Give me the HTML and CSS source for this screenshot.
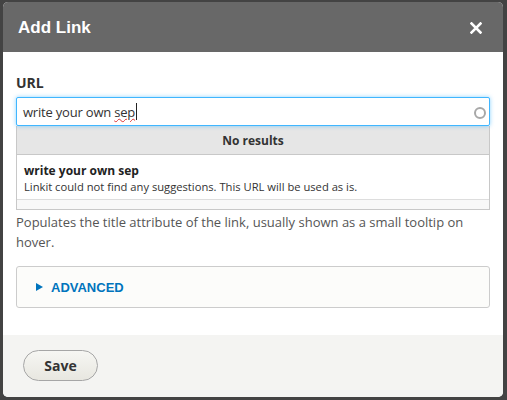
FILE: index.html
```html
<!DOCTYPE html>
<html>
<head>
<meta charset="utf-8">
<link rel="stylesheet" href="styles.css">
</head>
<body>
<div class="backdrop">
  <div class="dialog">
    <div class="titlebar">
      <span class="title">Add Link</span>
      <svg class="close" width="12" height="12" viewBox="0 0 12 12"><path d="M1.5 1.5 L10.5 10.5 M10.5 1.5 L1.5 10.5" stroke="#fff" stroke-width="2.6" stroke-linecap="square"/></svg>
    </div>
    <div class="content">
      <label class="label">URL</label>
      <div class="field">
        <div class="input">
          <span class="value">write your own <span class="spell">sep</span></span><span class="caret"></span>
          <span class="spinner"></span>
        </div>
        <div class="dropdown">
          <div class="noresults">No results</div>
          <div class="item">
            <div class="item-title">write your own sep</div>
            <div class="item-desc">Linkit could not find any suggestions. This URL will be used as is.</div>
          </div>
          <div class="item-foot"></div>
        </div>
      </div>
      <p class="desc">Populates the title attribute of the link, usually shown as a small tooltip on hover.</p>
      <div class="details">
        <span class="arrow"></span><span class="summary">ADVANCED</span>
      </div>
    </div>
    <div class="footer">
      <button class="save">Save</button>
    </div>
  </div>
</div>
</body>
</html>
```
FILE: styles.css
```css
html, body {
  margin: 0;
  padding: 0;
  background: #414141;
}
.backdrop {
  width: 507px;
  height: 400px;
  box-sizing: border-box;
  padding: 2px 4px 3px 3px;
  background: #434343;
}
.dialog {
  width: 500px;
  height: 395px;
  border-radius: 5px;
  overflow: hidden;
  display: flex;
  flex-direction: column;
  background: #fff;
  font-family: "Open Sans", "DejaVu Sans", sans-serif;
}
.titlebar {
  height: 50px;
  flex: none;
  background: #686868;
  display: flex;
  align-items: center;
  justify-content: space-between;
  padding: 0 21px 0 15px;
}
.title {
  color: #fff;
  font-family: "Liberation Sans", Arial, sans-serif;
  font-weight: bold;
  font-size: 17px;
  margin-top: 1px;
}
.close {
  display: block;
  margin-top: 1px;
}
.content {
  flex: 1;
  padding: 22px 13px 0 13px;
}
.label {
  display: block;
  font-family: "Open Sans", sans-serif;
  font-weight: bold;
  font-size: 14px;
  color: #333;
  line-height: 18px;
  margin-bottom: 5px;
}
.input {
  height: 29px;
  box-sizing: border-box;
  border: 1px solid #40b6ff;
  border-radius: 2px;
  box-shadow: 0 0 4px rgba(64,182,255,0.6);
  display: flex;
  align-items: center;
  padding: 0 6px;
  position: relative;
  background: #fff;
}
.value {
  font-size: 13px;
  letter-spacing: -0.2px;
  color: #333;
}
.spell {
  text-decoration: underline wavy #d33;
  text-decoration-thickness: 1px;
}
.caret {
  display: inline-block;
  width: 1px;
  height: 17px;
  background: #222;
  margin-left: 1px;
}
.spinner {
  position: absolute;
  right: 3px;
  top: 9px;
  width: 8px;
  height: 8px;
  border: 2px solid #a8a8a8;
  border-radius: 50%;
}
.dropdown {
  border: 1px solid #c8c8c8;
  border-top: none;
}
.noresults {
  height: 28px;
  background: #e6e6e6;
  border-bottom: 1px solid #c8c8c8;
  display: flex;
  align-items: center;
  justify-content: center;
  font-weight: bold;
  font-size: 12px;
  color: #333;
}
.item {
  padding: 8px 7px 4px;
  background: #fff;
  border-bottom: 1px solid #ddd;
}
.item-title {
  font-weight: bold;
  font-size: 12px;
  color: #222;
  line-height: 16px;
}
.item-desc {
  font-size: 11.2px;
  color: #333;
  line-height: 16px;
}
.item-foot {
  height: 9px;
  background: #f8f8f8;
}
.desc {
  margin: 2px 0 0;
  font-size: 13px;
  color: #555;
  line-height: 20px;
}
.details {
  margin-top: 14px;
  height: 42px;
  box-sizing: border-box;
  border: 1px solid #ccc;
  border-radius: 3px;
  background: #fcfcfa;
  display: flex;
  align-items: center;
  padding-left: 19px;
}
.arrow {
  width: 0;
  height: 0;
  border-left: 7px solid #0074bd;
  border-top: 4px solid transparent;
  border-bottom: 4px solid transparent;
  margin-right: 8px;
}
.summary {
  font-family: "Liberation Sans", Arial, sans-serif;
  font-weight: bold;
  font-size: 13px;
  color: #0074bd;
}
.footer {
  height: 62px;
  flex: none;
  background: #f4f4f2;
  display: flex;
  align-items: center;
  padding-left: 20px;
}
.save {
  width: 75px;
  height: 31px;
  border: 1px solid #a6a6a6;
  border-radius: 16px;
  background: linear-gradient(#f6f6f3, #e8e7e0);
  font-family: "Open Sans", sans-serif;
  font-weight: bold;
  font-size: 14px;
  color: #333;
  margin-top: -1px;
  padding: 0;
}
```
